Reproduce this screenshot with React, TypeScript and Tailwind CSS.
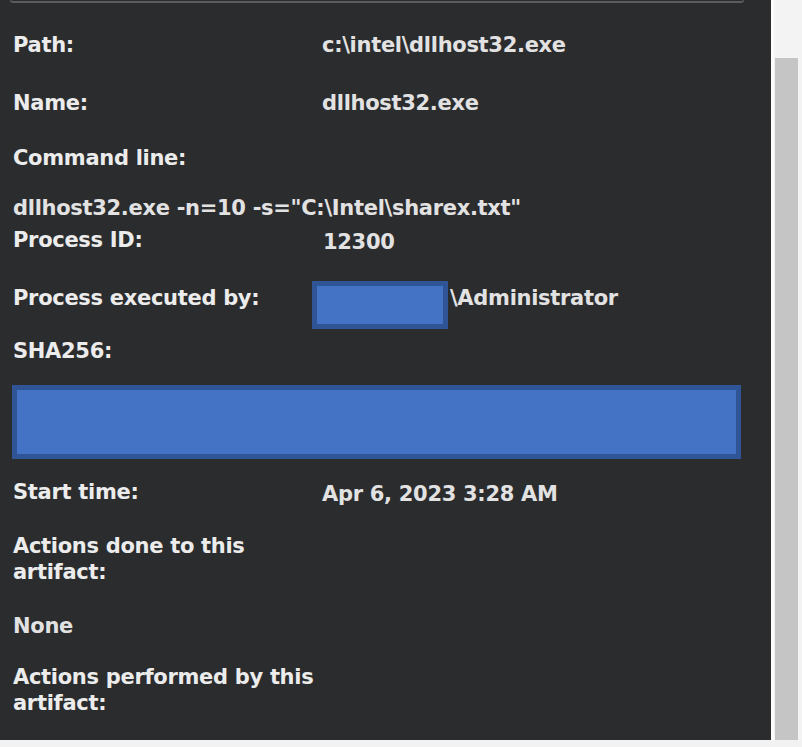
import React from "react"

const font = { fontFamily: '"DejaVu Sans", "Liberation Sans", sans-serif' }

function Redacted({ className }: { className: string }) {
  return <div className={`bg-[#4472c4] border-[5px] border-[#2f5597] ${className}`} />
}

export default function App() {
  return (
    <div className="w-[802px] h-[747px] bg-[#f2f2f2] flex flex-col" style={font}>
      <div className="flex h-[740px]">
        {/* details panel */}
        <div className="w-[771px] h-full bg-[#2b2c2e] text-[21px] leading-[26px] font-bold tracking-[-0.3px] text-[#ececec]">
          <div className="mx-[10px] w-[734px] h-[3px] border-b-2 border-x border-[#5b5c5e] rounded-b-[3px]" />

          <div className="pl-[13px]">
            <div className="mt-[29px] flex">
              <div className="w-[309px]">Path:</div>
              <div className="text-[#e2e2e2]">c:\intel\dllhost32.exe</div>
            </div>

            <div className="mt-[32px] flex">
              <div className="w-[309px]">Name:</div>
              <div className="text-[#e2e2e2]">dllhost32.exe</div>
            </div>

            <div className="mt-[29px]">Command line:</div>
            <div className="mt-[24px] text-[#e2e2e2]">dllhost32.exe -n=10 -s="C:\Intel\sharex.txt"</div>

            <div className="mt-[6px] flex">
              <div className="w-[310px]">Process ID:</div>
              <div className="pt-[2px] text-[#e2e2e2]">12300</div>
            </div>

            <div className="mt-[26px] flex items-start">
              <div className="w-[299px] mt-[4px]">Process executed by:</div>
              <Redacted className="w-[136px] h-[48px]" />
              <div className="mt-[4px] ml-[2px] text-[#e2e2e2]">\Administrator</div>
            </div>

            <div className="mt-[9px]">SHA256:</div>
            <Redacted className="mt-[21px] -ml-[1px] w-[729px] h-[74px]" />

            <div className="mt-[20px] flex">
              <div className="w-[309px]">Start time:</div>
              <div className="pt-[2px] text-[#e2e2e2]">Apr 6, 2023 3:28 AM</div>
            </div>

            <div className="mt-[26px]">
              Actions done to this
              <br />
              artifact:
            </div>

            <div className="mt-[28px] text-[#e2e2e2]">None</div>

            <div className="mt-[25px]">
              Actions performed by this
              <br />
              artifact:
            </div>
          </div>
        </div>

        {/* scrollbar */}
        <div className="flex-1 flex bg-[#f3f3f3]">
          <div className="w-[3px] bg-[#fbfbfb]" />
          <div className="flex-1 flex flex-col pt-[58px] pr-[4px] pl-[1px]">
            <div className="flex-1 bg-[#c5c5c5]" />
          </div>
        </div>
      </div>
    </div>
  )
}
